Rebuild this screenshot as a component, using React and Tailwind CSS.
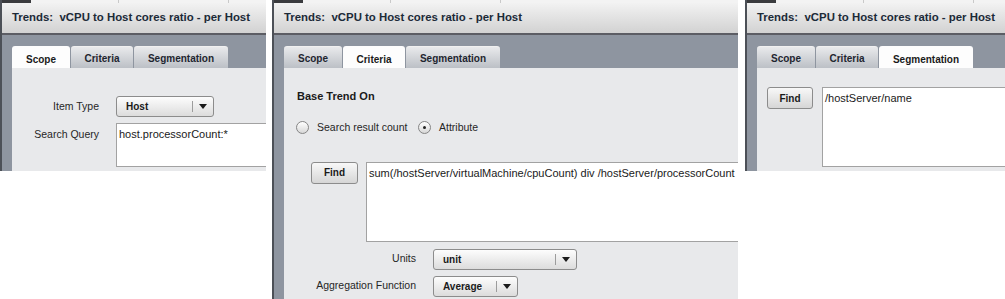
import React from "react";

const TABS = [
  { name: "Scope", w: "w-[58px]" },
  { name: "Criteria", w: "w-[62px]" },
  { name: "Segmentation", w: "w-[94px]" },
];

function Arrow() {
  return (
    <svg width="8" height="5" viewBox="0 0 8 5">
      <polygon points="0,0 8,0 4,5" fill="#1a1a1a" />
    </svg>
  );
}

function Dropdown({ value, width }) {
  return (
    <div
      className={`${width} h-[21px] flex items-stretch rounded-[3px] border border-[#8c8c8c] bg-gradient-to-b from-[#fdfdfd] to-[#dcdcdc]`}
    >
      <span className="flex-1 flex items-center pl-[9px] text-[10px] font-bold text-[#1a1a1a]">
        {value}
      </span>
      <span className="w-[21px] my-[4px] border-l border-[#9c9c9c] flex items-center justify-center">
        <Arrow />
      </span>
    </div>
  );
}

function FindButton({ w }) {
  return (
    <div
      className={`${w} h-[22px] shrink-0 flex items-center justify-center rounded-[3px] border border-[#8c8c8c] bg-gradient-to-b from-[#f8f8f8] to-[#d6d6d6] text-[10px] font-bold text-[#1a1a1a]`}
    >
      Find
    </div>
  );
}

function Radio({ checked }) {
  return (
    <span className="w-[13px] h-[13px] shrink-0 rounded-full border border-[#858585] bg-gradient-to-b from-white to-[#d8d8d8] flex items-center justify-center">
      {checked && <span className="w-[3px] h-[3px] rounded-full bg-[#222]" />}
    </span>
  );
}

function Panel({ width, height, active, children }) {
  return (
    <div
      className={`${width} ${height} shrink-0 flex flex-col overflow-hidden border-l-2 border-[#4c5057]`}
    >
      {/* leftover strip of the parent tab bar */}
      <div className="h-[3px] flex bg-[#f3f3f3]">
        <div className="w-[29px] bg-[#3a3b3e]" />
        <div className="w-[88px] border-r border-[#c9c9c9]" />
        <div className="w-[110px] border-r border-[#c9c9c9]" />
      </div>
      <div className="h-[30px] flex items-center pl-[10px] bg-gradient-to-b from-[#f2f2f2] to-[#d2d2d2] whitespace-pre text-[11.4px] font-bold text-[#1c2a38]">
        {"Trends:  vCPU to Host cores ratio - per Host"}
      </div>
      <div className="h-[2px] bg-[#5c5d64]" />
      <div className="flex-1 flex flex-col bg-[#8e95a0] pl-[10px]">
        <div className="flex gap-[1px] mt-[11px] h-[22px]">
          {TABS.map((t) =>
            t.name === active ? (
              <div
                key={t.name}
                className={`${t.w} rounded-t-[3px] bg-[#fdfdfd] flex justify-center pt-[6px] text-[10px] font-bold text-[#1a1a1a]`}
              >
                {t.name}
              </div>
            ) : (
              <div
                key={t.name}
                className={`${t.w} rounded-t-[3px] bg-gradient-to-b from-[#e9eaec] to-[#bcc0c6] border-t border-[#f0f0f0] flex justify-center pt-[4px] text-[10px] font-bold text-[#1f2630]`}
              >
                {t.name}
              </div>
            )
          )}
        </div>
        <div className="flex-1 bg-[#e8e9eb] text-[#262626]">{children}</div>
      </div>
    </div>
  );
}

export default function App() {
  return (
    <div className="w-[1005px] h-[299px] bg-white flex items-start font-['Liberation_Sans',Arial,sans-serif]">
      {/* Scope */}
      <Panel width="w-[266px]" height="h-[171px]" active="Scope">
        <div className="pt-[28px]">
          <div className="flex items-center">
            <span className="w-[87px] shrink-0 text-right text-[10.5px]">Item Type</span>
            <div className="ml-[17px]">
              <Dropdown value="Host" width="w-[98px]" />
            </div>
          </div>
          <div className="flex items-start mt-[6px]">
            <span className="w-[87px] shrink-0 pt-[4px] text-right text-[10.5px] whitespace-nowrap">
              Search Query
            </span>
            <div className="ml-[17px] w-[200px] h-[44px] shrink-0 bg-white border border-[#a2a2a2] px-[2px] pt-[2px] text-[11px] text-[#1a1a1a]">
              host.processorCount:*
            </div>
          </div>
        </div>
      </Panel>

      {/* Criteria */}
      <Panel width="w-[466px] ml-[6px]" height="h-[299px]" active="Criteria">
        <div className="pt-[21px]">
          <div className="pl-[13px] text-[11px] font-bold leading-[14px] text-[#1a1a1a]">
            Base Trend On
          </div>
          <div className="flex items-center pl-[12px] mt-[17px] text-[10.5px]">
            <div className="w-[122px] shrink-0 flex items-center">
              <Radio />
              <span className="ml-[8px]">Search result count</span>
            </div>
            <Radio checked />
            <span className="ml-[8px]">Attribute</span>
          </div>
          <div className="flex items-start pl-[27px] mt-[26px]">
            <FindButton w="w-[47px]" />
            <div className="ml-[8px] w-[420px] h-[80px] shrink-0 bg-white border border-[#a2a2a2] px-[2px] pt-[2px] text-[11px] text-[#1a1a1a] whitespace-nowrap">
              sum(/hostServer/virtualMachine/cpuCount) div /hostServer/processorCount
            </div>
          </div>
          <div className="flex items-center mt-[7px]">
            <span className="w-[132px] shrink-0 text-right text-[10.5px]">Units</span>
            <div className="ml-[17px]">
              <Dropdown value="unit" width="w-[144px]" />
            </div>
          </div>
          <div className="flex items-center mt-[6px]">
            <span className="w-[132px] shrink-0 text-right text-[10.5px] whitespace-nowrap">
              Aggregation Function
            </span>
            <div className="ml-[17px]">
              <Dropdown value="Average" width="w-[85px]" />
            </div>
          </div>
        </div>
      </Panel>

      {/* Segmentation */}
      <Panel width="w-[260px] ml-[7px]" height="h-[171px]" active="Segmentation">
        <div className="flex items-start pt-[19px] pl-[10px]">
          <FindButton w="w-[46px]" />
          <div className="ml-[9px] w-[200px] h-[80px] shrink-0 bg-white border border-[#a2a2a2] px-[2px] pt-[2px] text-[11px] text-[#1a1a1a]">
            /hostServer/name
          </div>
        </div>
      </Panel>
    </div>
  );
}
